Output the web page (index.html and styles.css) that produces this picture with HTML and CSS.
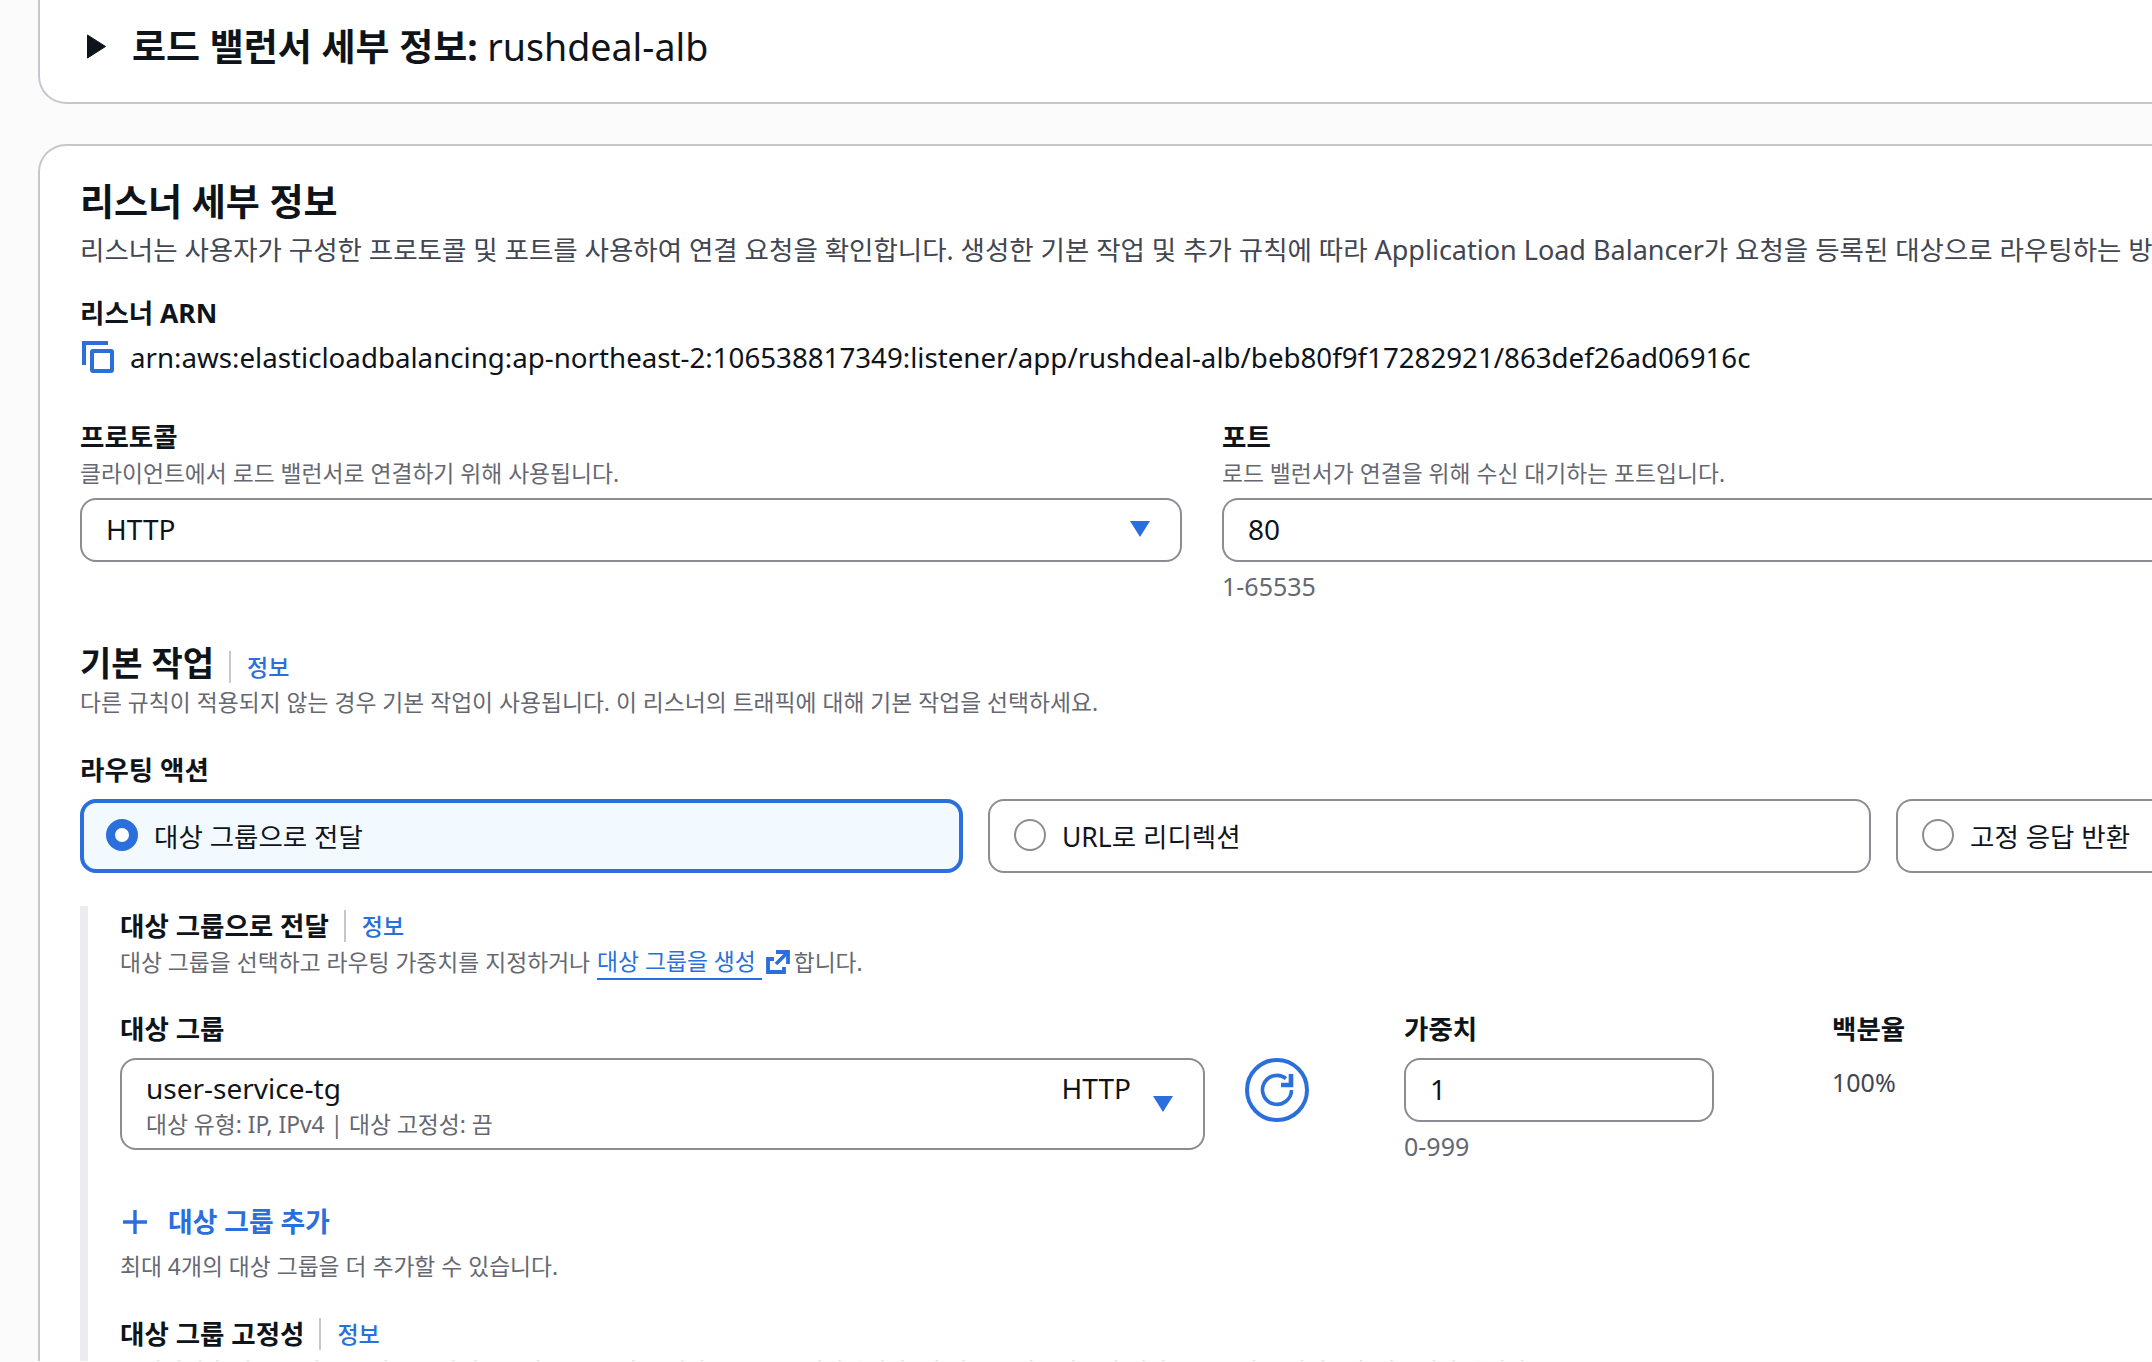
FILE: index.html
```html
<!DOCTYPE html>
<html lang="ko">
<head>
    <meta charset="UTF-8">
    <meta name="viewport" content="width=device-width, initial-scale=1.0">
    <title>리스너 세부 정보</title>
    <link rel="stylesheet" href="styles.css">
</head>
<body>
    <div class="page">
        <!-- 로드 밸런서 세부 정보 -->
        <div class="card card-top">
            <svg class="caret-right" viewBox="0 0 19 25"><path d="M0.5 1 L18.5 12.5 L0.5 24 Z" stroke="#0f141a" stroke-linejoin="round"/></svg>
            <h2 class="top-title">로드 밸런서 세부 정보: <span class="top-name">rushdeal-alb</span></h2>
        </div>

        <!-- 리스너 세부 정보 -->
        <div class="card card-main">
            <h2 class="card-title">리스너 세부 정보</h2>
            <p class="desc desc-main">리스너는 사용자가 구성한 프로토콜 및 포트를 사용하여 연결 요청을 확인합니다. 생성한 기본 작업 및 추가 규칙에 따라 <span class="desc-latin">Application Load Balancer</span>가 요청을 등록된 대상으로 라우팅하는 방법이 결정됩니다.</p>

            <div class="label arn-label">리스너 ARN</div>
            <div class="arn-row">
                <svg class="copy-icon" viewBox="0 0 32 32" fill="none" stroke="#2a6fdb" stroke-width="4"><path d="M2 24 V2 H26"/><rect x="10" y="10" width="20" height="20" rx="1"/></svg>
                <span class="arn-text">arn:aws:elasticloadbalancing:ap-northeast-2:106538817349:listener/app/rushdeal-alb/beb80f9f17282921/863def26ad06916c</span>
            </div>

            <div class="proto-row">
                <div class="proto-col">
                    <div class="label">프로토콜</div>
                    <div class="small-desc">클라이언트에서 로드 밸런서로 연결하기 위해 사용됩니다.</div>
                    <div class="field select-field">
                        <span>HTTP</span>
                        <svg class="caret-down" viewBox="0 0 20 16"><path d="M0 0 H20 L10 16 Z"/></svg>
                    </div>
                </div>
                <div class="port-col">
                    <div class="label">포트</div>
                    <div class="small-desc">로드 밸런서가 연결을 위해 수신 대기하는 포트입니다.</div>
                    <div class="field">80</div>
                    <div class="hint">1-65535</div>
                </div>
            </div>

            <div class="head-row action-head">
                <h3 class="section-title">기본 작업</h3>
                <a class="info-link">정보</a>
            </div>
            <div class="small-desc action-desc">다른 규칙이 적용되지 않는 경우 기본 작업이 사용됩니다. 이 리스너의 트래픽에 대해 기본 작업을 선택하세요.</div>

            <div class="label routing-label">라우팅 액션</div>
            <div class="tiles">
                <div class="tile tile-on"><span class="radio radio-on"></span>대상 그룹으로 전달</div>
                <div class="tile"><span class="radio"></span>URL로 리디렉션</div>
                <div class="tile tile-last"><span class="radio"></span>고정 응답 반환</div>
            </div>

            <!-- 대상 그룹으로 전달 -->
            <div class="forward">
                <div class="head-row">
                    <div class="label">대상 그룹으로 전달</div>
                    <a class="info-link">정보</a>
                </div>
                <div class="small-desc forward-desc">대상 그룹을 선택하고 라우팅 가중치를 지정하거나 <a class="ext-link">대상 그룹을 생성 </a><svg class="ext-icon" viewBox="0 0 24 24" fill="none" stroke="#2a6fdb" stroke-width="3.8"><path d="M8 9 H2 V22 H18 V17"/><path d="M10 2 H22 V14"/><path d="M21 3 L10 14"/></svg>합니다.</div>

                <div class="tg-row">
                    <div class="tg-col">
                        <div class="label">대상 그룹</div>
                        <div class="field tg-select">
                            <div class="tg-main">
                                <span>user-service-tg</span>
                                <span class="tg-proto">HTTP</span>
                            </div>
                            <div class="tg-meta">대상 유형: IP, IPv4 | 대상 고정성: 끔</div>
                            <svg class="caret-down tg-caret" viewBox="0 0 20 16"><path d="M0 0 H20 L10 16 Z"/></svg>
                        </div>
                    </div>
                    <div class="refresh">
                        <svg viewBox="0 0 64 64" fill="none" stroke="#2a6fdb" stroke-width="4"><circle cx="32" cy="32" r="30"/><path d="M46.5 32 A14.5 14.5 0 1 1 41 20.5" stroke-width="3.6"/><path d="M46 16 V27 H36" stroke-width="4.6"/></svg>
                    </div>
                    <div class="weight-col">
                        <div class="label">가중치</div>
                        <div class="field weight-field">1</div>
                        <div class="hint">0-999</div>
                    </div>
                    <div class="percent-col">
                        <div class="label">백분율</div>
                        <div class="percent">100%</div>
                    </div>
                </div>

                <div class="add-row">
                    <svg class="plus" viewBox="0 0 24 24" fill="none" stroke="#2a6fdb" stroke-width="3.4"><path d="M12 0 V24 M0 12 H24"/></svg>
                    <span>대상 그룹 추가</span>
                </div>
                <div class="small-desc add-desc">최대 4개의 대상 그룹을 더 추가할 수 있습니다.</div>

                <div class="head-row sticky-head">
                    <div class="label">대상 그룹 고정성</div>
                    <a class="info-link">정보</a>
                </div>
                <div class="small-desc sticky-desc">고정성이 활성화된 경우 동일한 클라이언트의 요청을 같은 대상 그룹으로 전달합니다. 이 기능을 사용하려면 대상 그룹에서 고정성을 활성화해야 합니다.</div>
            </div>
        </div>
    </div>
</body>
</html>
```

FILE: styles.css
```css
body {
    margin: 0;
    height: 1362px;
    overflow: hidden;
    background-color: #fbfbfb;
    font-family: "Noto Sans", "Noto Sans CJK KR", sans-serif;
    font-size: 26.5px;
    color: #0f141a;
}
h2, h3, p {
    margin: 0;
}
.page {
    padding-left: 38px;
}
.card {
    background-color: #ffffff;
    border: 2px solid #c6c6cd;
    border-right: none;
    border-radius: 28px 0 0 28px;
}
.card-top {
    height: 131px;
    margin-top: -27px;
    display: flex;
    align-items: center;
    padding: 16px 0 0 47px;
    box-sizing: border-box;
}
.caret-right {
    width: 19px;
    height: 25px;
    fill: #0f141a;
    margin-right: 26px;
}
.top-title {
    font-size: 37px;
    font-weight: 700;
    line-height: 48px;
}
.top-name {
    font-size: 37.6px;
    font-weight: 400;
}
.card-main {
    margin-top: 40px;
    padding: 32px 0 0 40px;
    border-bottom: none;
    border-radius: 28px 0 0 0;
    height: 1217px;
    box-sizing: border-box;
    overflow: hidden;
}
.card-title {
    font-size: 37px;
    font-weight: 700;
    line-height: 48px;
}
.desc {
    color: #424650;
    font-size: 26.5px;
    line-height: 34px;
    white-space: nowrap;
}
.desc-latin {
    font-size: 27px;
}
.desc-main {
    margin-top: 7px;
}
.label {
    font-size: 26.5px;
    font-weight: 700;
    line-height: 34px;
}
.arn-label {
    margin-top: 29px;
}
.arn-row {
    display: flex;
    align-items: center;
    margin-top: 10px;
    height: 34px;
    white-space: nowrap;
}
.copy-icon {
    width: 32px;
    height: 32px;
    margin: 0 16px 0 2px;
}
.arn-text {
    font-size: 27.7px;
}
.proto-row {
    display: flex;
    margin-top: 46px;
}
.proto-col {
    width: 1102px;
    flex-shrink: 0;
}
.port-col {
    margin-left: 40px;
    flex-grow: 1;
}
.small-desc {
    color: #656871;
    font-size: 22.8px;
    line-height: 32px;
    white-space: nowrap;
}
.proto-col .small-desc,
.port-col .small-desc {
    margin-top: 4px;
}
.field {
    box-sizing: border-box;
    height: 64px;
    margin-top: 8px;
    padding: 0 0 2px 24px;
    border: 2px solid #8c8c94;
    border-radius: 16px;
    background-color: #ffffff;
    display: flex;
    align-items: center;
    font-size: 28px;
}
.port-col .field {
    border-right: none;
    border-radius: 16px 0 0 16px;
}
.select-field {
    justify-content: space-between;
    padding-right: 30px;
}
.caret-down {
    width: 20px;
    height: 16px;
    fill: #2a6fdb;
}
.hint {
    color: #656871;
    font-size: 25px;
    line-height: 32px;
    margin-top: 8px;
}
.head-row {
    display: flex;
    align-items: center;
}
.action-head {
    margin-top: 39px;
}
.section-title {
    font-size: 34px;
    font-weight: 700;
    line-height: 44px;
}
.action-desc {
    margin-top: 2px;
}
.info-link {
    color: #2a6fdb;
    font-size: 23px;
    font-weight: 500;
    line-height: 32px;
    margin-left: 15px;
    padding-left: 16px;
    border-left: 2px solid #c6c6cd;
}
.action-head .info-link {
    margin-top: 7px;
}
.routing-label {
    margin-top: 34px;
}
.tiles {
    display: flex;
    gap: 25px;
    margin-top: 12px;
}
.tile {
    box-sizing: border-box;
    width: 883px;
    height: 74px;
    flex-shrink: 0;
    display: flex;
    align-items: center;
    padding: 0 0 2px 24px;
    border: 2px solid #8c8c94;
    border-radius: 16px;
    background-color: #ffffff;
}
.tile-on {
    border: 4px solid #2a6fdb;
    background-color: #f2f9ff;
    padding-left: 22px;
}
.tile-last {
    border-right: none;
    border-radius: 16px 0 0 16px;
}
.radio {
    box-sizing: border-box;
    width: 32px;
    height: 32px;
    border-radius: 50%;
    border: 2px solid #8c8c94;
    margin-right: 16px;
    background-color: #ffffff;
}
.radio-on {
    border: 9px solid #2a6fdb;
}
.forward {
    margin-top: 33px;
    padding: 3px 0 0 32px;
    border-left: 8px solid #ebebf0;
}
.forward-desc {
    margin-top: 3px;
    display: flex;
    align-items: center;
}
.ext-link {
    color: #2a6fdb;
    border-bottom: 2px solid #2a6fdb;
    margin-left: 7px;
    white-space: pre;
}
.ext-icon {
    width: 24px;
    height: 24px;
    margin: 0 4px 2px 4px;
}
.tg-row {
    display: flex;
    margin-top: 32px;
}
.tg-col {
    width: 1085px;
    flex-shrink: 0;
}
.tg-select {
    display: block;
    height: 92px;
    padding: 9px 24px 0;
    position: relative;
    margin-top: 12px;
}
.tg-main {
    display: flex;
    justify-content: space-between;
    padding-right: 48px;
    line-height: 38px;
}
.tg-meta {
    color: #656871;
    font-size: 22.8px;
    line-height: 32px;
    margin-top: 2px;
}
.tg-caret {
    position: absolute;
    right: 30px;
    top: 36px;
}
.refresh {
    width: 64px;
    height: 64px;
    margin: 46px 95px 0 40px;
    flex-shrink: 0;
}
.refresh svg {
    display: block;
    width: 64px;
    height: 64px;
}
.weight-col {
    width: 310px;
    flex-shrink: 0;
}
.weight-field {
    margin-top: 12px;
}
.percent-col {
    margin-left: 118px;
}
.percent {
    color: #424650;
    font-size: 25px;
    line-height: 32px;
    margin-top: 20px;
}
.add-row {
    display: flex;
    align-items: center;
    margin-top: 43px;
    color: #2a6fdb;
    font-size: 26.8px;
    font-weight: 600;
    line-height: 34px;
}
.plus {
    width: 24px;
    height: 24px;
    margin: 0 21px 0 3px;
}
.add-desc {
    margin-top: 12px;
}
.sticky-head {
    margin-top: 34px;
}
.sticky-desc {
    margin-top: 5px;
}
```
